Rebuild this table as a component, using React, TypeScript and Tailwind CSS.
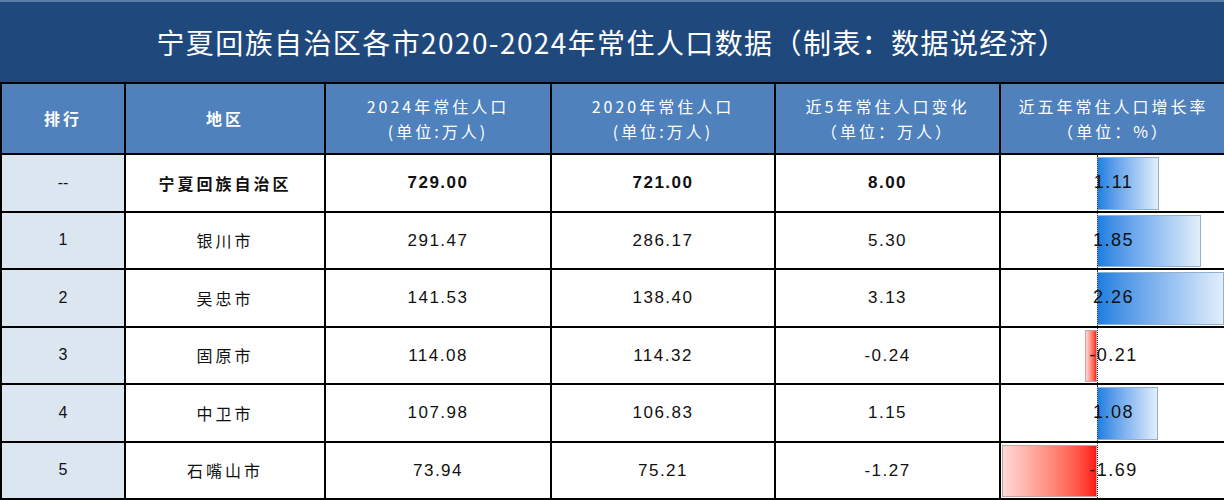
const rows = [
  { rank: "--", name: "宁夏回族自治区", y2024: "729.00", y2020: "721.00", change: "8.00", rate: 1.11, bold: true },
  { rank: "1", name: "银川市", y2024: "291.47", y2020: "286.17", change: "5.30", rate: 1.85 },
  { rank: "2", name: "吴忠市", y2024: "141.53", y2020: "138.40", change: "3.13", rate: 2.26 },
  { rank: "3", name: "固原市", y2024: "114.08", y2020: "114.32", change: "-0.24", rate: -0.21 },
  { rank: "4", name: "中卫市", y2024: "107.98", y2020: "106.83", change: "1.15", rate: 1.08 },
  { rank: "5", name: "石嘴山市", y2024: "73.94", y2020: "75.21", change: "-1.27", rate: -1.69 },
];

const cols = "grid grid-cols-[124px_200px_226px_224px_225px_225px]";
const cjk = "font-['Noto_Sans_CJK_SC','Noto_Sans',sans-serif]";
const num = "font-['Liberation_Sans','Noto_Sans_CJK_SC',sans-serif]";

// px per 1% on the data bar, axis 96px from cell left
const SCALE = 56.2;
const AXIS = 96;

function RateBar({ value }: { value: number }) {
  const w = Math.abs(value) * SCALE;
  const positive = value >= 0;
  return (
    <div className="relative h-full border-b-2 border-black">
      {positive ? (
        <div
          className="absolute top-[2px] bottom-[1px] border border-[#8fb0d0] bg-gradient-to-r from-[#1b7fe0] to-[#e2eefa]"
          style={{ left: AXIS, width: w }}
        />
      ) : (
        <div
          className="absolute top-[2px] bottom-[1px] border border-[#d0a0a0] bg-gradient-to-r from-[#ffd8d8] to-[#ff1010]"
          style={{ right: 225 - AXIS, width: w }}
        />
      )}
      <div className="absolute top-0 bottom-0 left-[96px] border-l border-dotted border-[#333]" />
      <div className={`relative flex h-full items-center justify-center text-[18px] tracking-[1.5px] text-[#111] ${num}`}>
        {value.toFixed(2)}
      </div>
    </div>
  );
}

export default function App() {
  return (
    <div className="w-[1224px] h-[500px] overflow-hidden bg-white">
      <div className={`flex h-[82px] items-center justify-center border-t-2 border-[#5a7ca8] bg-[#1f497d] text-[28px] tracking-[1.4px] text-white ${cjk}`}>
        宁夏回族自治区各市2020-2024年常住人口数据（制表：数据说经济）
      </div>
      <div className={`${cols} h-[73px] border-t-2 border-b-2 border-l-2 border-black bg-[#4f81bd] text-white text-[16px] tracking-[3px] leading-[25px] ${cjk}`}>
        <div className="flex items-center justify-center border-r-2 border-black font-bold">排行</div>
        <div className="flex items-center justify-center border-r-2 border-black font-bold">地区</div>
        <div className="flex flex-col items-center justify-center border-r-2 border-black">
          <span>2024年常住人口</span>
          <span>(单位:万人)</span>
        </div>
        <div className="flex flex-col items-center justify-center border-r-2 border-black">
          <span>2020年常住人口</span>
          <span>(单位:万人)</span>
        </div>
        <div className="flex flex-col items-center justify-center border-r-2 border-black">
          <span>近5年常住人口变化</span>
          <span>（单位：万人）</span>
        </div>
        <div className="flex flex-col items-center justify-center">
          <span>近五年常住人口增长率</span>
          <span>（单位：%）</span>
        </div>
      </div>
      {rows.map((r) => (
        <div key={r.rank} className={`${cols} h-[57.5px] border-l-2 border-black text-[#111]`}>
          <div className={`flex items-center justify-center border-r-2 border-b-2 border-black bg-[#dce6f1] text-[16px] ${num}`}>
            {r.rank}
          </div>
          <div className={`flex items-center justify-center border-r-2 border-b-2 border-black text-[16px] tracking-[3px] ${cjk} ${r.bold ? "font-bold" : ""}`}>
            {r.name}
          </div>
          <div className={`flex items-center justify-center border-r-2 border-b-2 border-black text-[17px] tracking-[1.5px] ${num} ${r.bold ? "font-bold" : ""}`}>
            {r.y2024}
          </div>
          <div className={`flex items-center justify-center border-r-2 border-b-2 border-black text-[17px] tracking-[1.5px] ${num} ${r.bold ? "font-bold" : ""}`}>
            {r.y2020}
          </div>
          <div className={`flex items-center justify-center border-r-2 border-b-2 border-black text-[17px] tracking-[1.5px] ${num} ${r.bold ? "font-bold" : ""}`}>
            {r.change}
          </div>
          <RateBar value={r.rate} />
        </div>
      ))}
    </div>
  );
}
